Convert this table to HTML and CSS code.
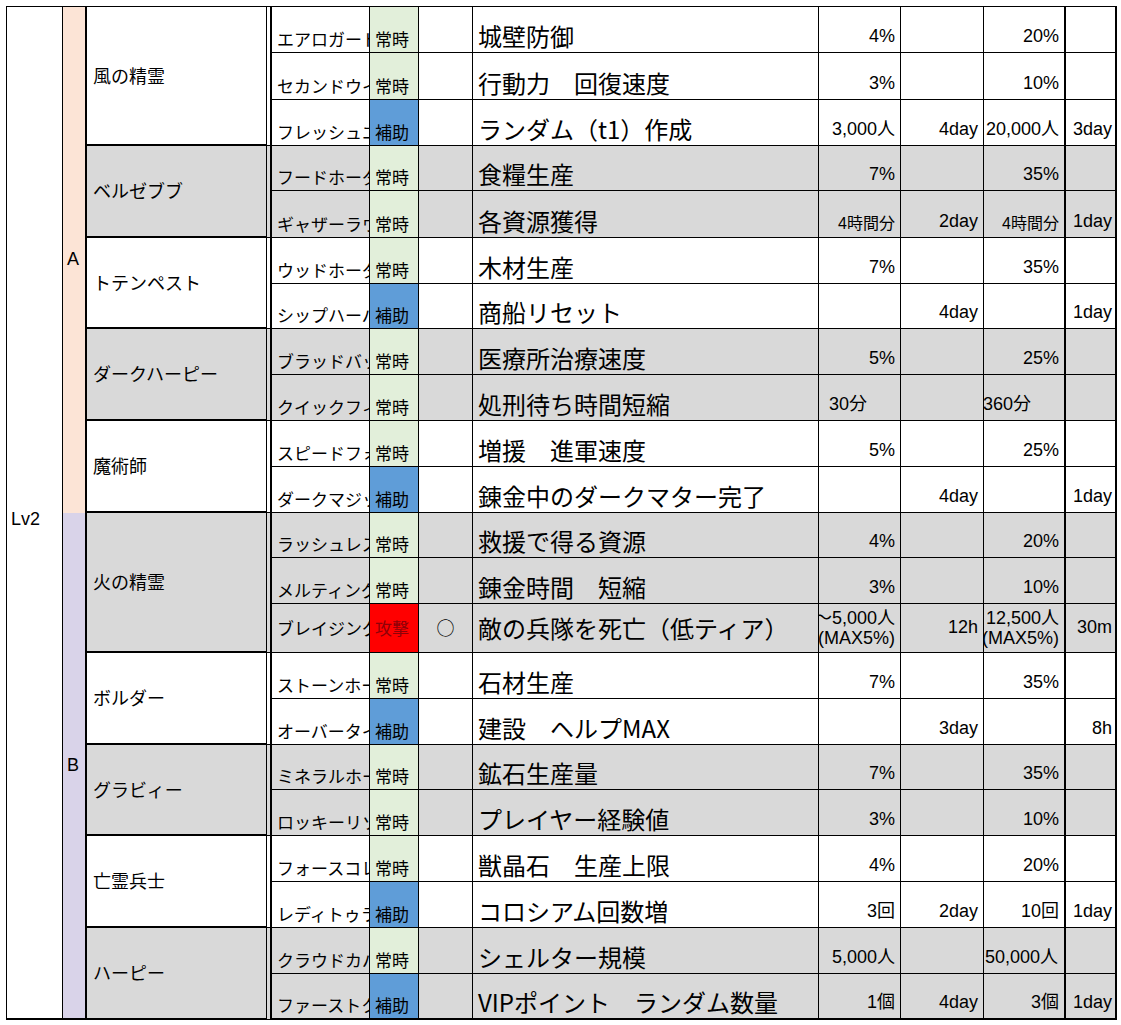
FILE: index.html
```html
<!DOCTYPE html>
<html lang="ja">
<head>
<meta charset="utf-8">
<title>Lv2</title>
<link rel="stylesheet" href="styles.css">
</head>
<body>
<div class="sheet">
  <div class="c lv">Lv2</div>
  <div class="c ab a">A</div>

  <div class="grp">
    <div class="c name s3">風の精霊</div>
    <div class="c gap s3"></div>
    <div class="c sk">エアロガード</div><div class="c ty on">常時</div><div class="c ci"></div><div class="c de">城壁防御</div><div class="c v">4%</div><div class="c v"></div><div class="c v v3">20%</div><div class="c v v4"></div>
    <div class="c sk">セカンドウインド</div><div class="c ty on">常時</div><div class="c ci"></div><div class="c de">行動力　回復速度</div><div class="c v">3%</div><div class="c v"></div><div class="c v v3">10%</div><div class="c v v4"></div>
    <div class="c sk">フレッシュエア</div><div class="c ty ho">補助</div><div class="c ci"></div><div class="c de">ランダム（t1）作成</div><div class="c v">3,000人</div><div class="c v">4day</div><div class="c v v3">20,000人</div><div class="c v v4">3day</div>
  </div>

  <div class="grp g">
    <div class="c name s2">ベルゼブブ</div>
    <div class="c gap s2"></div>
    <div class="c sk">フードホーダー</div><div class="c ty on">常時</div><div class="c ci"></div><div class="c de">食糧生産</div><div class="c v">7%</div><div class="c v"></div><div class="c v v3">35%</div><div class="c v v4"></div>
    <div class="c sk">ギャザーラウンド</div><div class="c ty on">常時</div><div class="c ci"></div><div class="c de">各資源獲得</div><div class="c v sm">4時間分</div><div class="c v">2day</div><div class="c v v3 sm">4時間分</div><div class="c v v4">1day</div>
  </div>

  <div class="grp">
    <div class="c name s2">トテンペスト</div>
    <div class="c gap s2"></div>
    <div class="c sk">ウッドホーダー</div><div class="c ty on">常時</div><div class="c ci"></div><div class="c de">木材生産</div><div class="c v">7%</div><div class="c v"></div><div class="c v v3">35%</div><div class="c v v4"></div>
    <div class="c sk">シップハーバー</div><div class="c ty ho">補助</div><div class="c ci"></div><div class="c de">商船リセット</div><div class="c v"></div><div class="c v">4day</div><div class="c v v3"></div><div class="c v v4">1day</div>
  </div>

  <div class="grp g">
    <div class="c name s2">ダークハーピー</div>
    <div class="c gap s2"></div>
    <div class="c sk">ブラッドバッグ</div><div class="c ty on">常時</div><div class="c ci"></div><div class="c de">医療所治療速度</div><div class="c v">5%</div><div class="c v"></div><div class="c v v3">25%</div><div class="c v v4"></div>
    <div class="c sk">クイックフィックス</div><div class="c ty on">常時</div><div class="c ci"></div><div class="c de">処刑待ち時間短縮</div><div class="c v mins">30分</div><div class="c v"></div><div class="c v v3 mins">360分</div><div class="c v v4"></div>
  </div>

  <div class="grp">
    <div class="c name s2">魔術師</div>
    <div class="c gap s2"></div>
    <div class="c sk">スピードフォース</div><div class="c ty on">常時</div><div class="c ci"></div><div class="c de">増援　進軍速度</div><div class="c v">5%</div><div class="c v"></div><div class="c v v3">25%</div><div class="c v v4"></div>
    <div class="c sk">ダークマジック</div><div class="c ty ho">補助</div><div class="c ci"></div><div class="c de">錬金中のダークマター完了</div><div class="c v"></div><div class="c v">4day</div><div class="c v v3"></div><div class="c v v4">1day</div>
  </div>

  <div class="c ab b">B</div>

  <div class="grp g">
    <div class="c name s3">火の精霊</div>
    <div class="c gap s3"></div>
    <div class="c sk">ラッシュレスキュー</div><div class="c ty on">常時</div><div class="c ci"></div><div class="c de">救援で得る資源</div><div class="c v">4%</div><div class="c v"></div><div class="c v v3">20%</div><div class="c v v4"></div>
    <div class="c sk">メルティングポット</div><div class="c ty on">常時</div><div class="c ci"></div><div class="c de">錬金時間　短縮</div><div class="c v">3%</div><div class="c v"></div><div class="c v v3">10%</div><div class="c v v4"></div>
    <div class="c sk mid">ブレイジングストーム</div><div class="c ty at mid">攻撃</div><div class="c ci mid">○</div><div class="c de mid">敵の兵隊を死亡（低ティア）</div><div class="c v mid two"><span>～5,000人<br>(MAX5%)</span></div><div class="c v mid">12h</div><div class="c v v3 mid two"><span>12,500人<br>(MAX5%)</span></div><div class="c v v4 mid">30m</div>
  </div>

  <div class="grp">
    <div class="c name s2">ボルダー</div>
    <div class="c gap s2"></div>
    <div class="c sk">ストーンホーダー</div><div class="c ty on">常時</div><div class="c ci"></div><div class="c de">石材生産</div><div class="c v">7%</div><div class="c v"></div><div class="c v v3">35%</div><div class="c v v4"></div>
    <div class="c sk">オーバータイム</div><div class="c ty ho">補助</div><div class="c ci"></div><div class="c de">建設　ヘルプMAX</div><div class="c v"></div><div class="c v">3day</div><div class="c v v3"></div><div class="c v v4">8h</div>
  </div>

  <div class="grp g">
    <div class="c name s2">グラビィー</div>
    <div class="c gap s2"></div>
    <div class="c sk">ミネラルホーダー</div><div class="c ty on">常時</div><div class="c ci"></div><div class="c de">鉱石生産量</div><div class="c v">7%</div><div class="c v"></div><div class="c v v3">35%</div><div class="c v v4"></div>
    <div class="c sk">ロッキーリソース</div><div class="c ty on">常時</div><div class="c ci"></div><div class="c de">プレイヤー経験値</div><div class="c v">3%</div><div class="c v"></div><div class="c v v3">10%</div><div class="c v v4"></div>
  </div>

  <div class="grp">
    <div class="c name s2">亡霊兵士</div>
    <div class="c gap s2"></div>
    <div class="c sk">フォースコレクト</div><div class="c ty on">常時</div><div class="c ci"></div><div class="c de">獣晶石　生産上限</div><div class="c v">4%</div><div class="c v"></div><div class="c v v3">20%</div><div class="c v v4"></div>
    <div class="c sk">レディトゥランブル</div><div class="c ty ho">補助</div><div class="c ci"></div><div class="c de">コロシアム回数増</div><div class="c v">3回</div><div class="c v">2day</div><div class="c v v3">10回</div><div class="c v v4">1day</div>
  </div>

  <div class="grp g last">
    <div class="c name s2">ハーピー</div>
    <div class="c gap s2"></div>
    <div class="c sk">クラウドカバー</div><div class="c ty on">常時</div><div class="c ci"></div><div class="c de">シェルター規模</div><div class="c v">5,000人</div><div class="c v"></div><div class="c v v3 lft">50,000人</div><div class="c v v4"></div>
    <div class="c sk">ファーストクラス</div><div class="c ty ho">補助</div><div class="c ci"></div><div class="c de">VIPポイント　ランダム数量</div><div class="c v">1個</div><div class="c v">4day</div><div class="c v v3">3個</div><div class="c v v4">1day</div>
  </div>
</div>
</body>
</html>
```

FILE: styles.css
```css
html, body {
  margin: 0;
  padding: 0;
  background: #ffffff;
}

body {
  font-family: "Liberation Sans", "Noto Sans CJK JP", sans-serif;
  color: #000;
}

.sheet {
  display: grid;
  grid-template-columns: 56px 24px 180px 5px 98px 49px 54px 346px 82px 83px 82px 51px;
  grid-template-rows: 46px 47px 46px 45px 47px 46px 45px 46px 46px 46px 46px 45px 46px 49px 46px 46px 45px 46px 46px 46px 46px 46px;
  width: max-content;
  margin: 6px 0 0 6px;
  border-top: 1px solid #000;
  border-left: 1px solid #000;
}

.grp {
  display: contents;
}

.c {
  box-sizing: border-box;
  display: flex;
  align-items: flex-end;
  overflow: hidden;
  white-space: nowrap;
  border-right: 1px solid #000;
  border-bottom: 1px solid #000;
  padding: 0 4px 3px 5px;
  line-height: 1.2;
  background: #fff;
}

.g > .c {
  background: #d9d9d9;
}

.s2 { grid-row: span 2; }
.s3 { grid-row: span 3; }

/* Level column */
.lv {
  grid-row: span 22;
  align-items: center;
  padding: 14px 0 0 4px;
  font-size: 18px;
  border-bottom-width: 2px;
}

/* A / B band */
.ab {
  grid-row: span 11;
  align-items: center;
  padding: 0 0 0 4px;
  font-size: 18px;
  border-right-width: 2px;
  border-bottom: none;
}
.ab.a { background: #fce4d6; }
.ab.b { background: #d9d3e9; border-bottom: 2px solid #000; }

/* Character name */
.name {
  align-items: center;
  padding: 0 0 0 6px;
  font-family: "Noto Sans CJK JP", sans-serif;
  font-size: 18px;
  border-bottom-width: 2px;
}

.gap {
  padding: 0;
  border-right-width: 2px;
}

/* Skill name */
.sk {
  font-family: "Noto Sans CJK JP", sans-serif;
  font-size: 17px;
  padding-left: 5px;
  padding-right: 0;
  padding-bottom: 3px;
}

/* Type */
.ty {
  font-family: "Noto Sans CJK JP", sans-serif;
  font-size: 17px;
  padding-left: 5px;
  padding-bottom: 3px;
}
.sheet .ty.on { background: #e2efda; }
.sheet .ty.ho { background: #5f9dd8; }
.sheet .ty.at { background: #ff0000; color: #8e0008; }

/* Circle mark */
.ci {
  justify-content: center;
  font-family: "Noto Sans CJK JP", sans-serif;
  font-size: 18px;
  padding: 0 0 3px 0;
}

/* Description */
.de {
  font-family: "Noto Sans CJK JP", sans-serif;
  font-size: 24px;
  padding-left: 5px;
  padding-bottom: 1px;
}

/* Values */
.v {
  justify-content: flex-end;
  font-size: 18px;
  padding-right: 5px;
  padding-left: 0;
  padding-bottom: 4px;
}
.v.sm { font-size: 16px; }
.v.mins { padding-right: 33px; }
.v.lft { justify-content: flex-start; padding-left: 1px; }
.v3 { border-right-width: 2px; }
.v4 { border-right-width: 2px; padding-right: 3px; }

.mid {
  align-items: center;
  padding-bottom: 0;
}

.two span {
  display: block;
  text-align: right;
  line-height: 20px;
}

.last > .c:nth-last-child(-n+8) {
  border-bottom-width: 2px;
}
```
